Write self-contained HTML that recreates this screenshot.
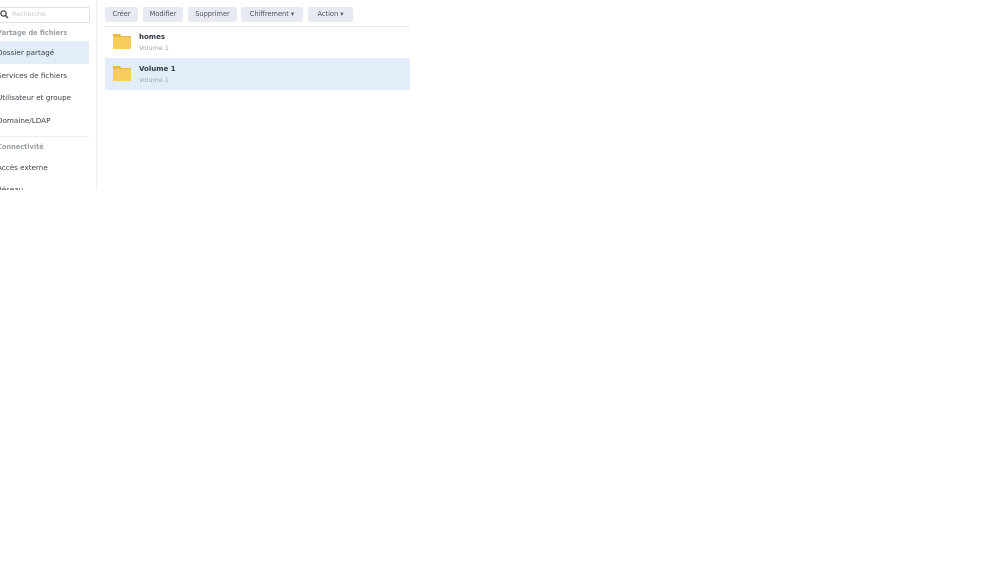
<!DOCTYPE html>
<html><head><meta charset="utf-8"><style>
body{margin:0;width:1000px;height:575px;background:#fff;font-family:"DejaVu Sans","Liberation Sans",sans-serif;position:relative;overflow:hidden;color:#333}
.a{position:absolute;white-space:nowrap}
.side{position:absolute;left:0;top:0;width:96px;height:190px;border-right:1px solid #eceef1;overflow:hidden}
.it{position:absolute;left:-3px;font-size:7.2px;color:#3a3f48}
.hd{position:absolute;left:-3px;font-size:6.6px;color:#9aa0a8;font-weight:bold}
.btn{position:absolute;top:7px;height:15px;background:#e7ebf1;border-radius:2px;font-size:6.6px;color:#4a5260;text-align:center;line-height:15px}
.fold{position:absolute;width:18px;height:15px}
.nm{font-size:7px;font-weight:bold;color:#333a45}
.vl{font-size:6.4px;color:#a0a6ae}
</style></head><body>
<div class="side">
<div class="a" style="left:-2px;top:7px;width:90px;height:14px;border:1px solid #dde1e6;border-radius:2px"></div>
<svg class="a" style="left:0;top:10px" width="9" height="9" viewBox="0 0 9 9"><circle cx="3.5" cy="3.5" r="2.6" fill="none" stroke="#444" stroke-width="1.3"/><path d="M5.5 5.5L8 8" stroke="#444" stroke-width="1.4"/></svg>
<div class="a" style="left:12px;top:10px;font-size:6.4px;color:#c5c9ce">Recherche</div>
<div class="hd" style="top:29px">Partage de fichiers</div>
<div class="a" style="left:0;top:41px;width:89px;height:23px;background:#e3edf9;border-radius:2px"></div>
<div class="it" style="top:48px">Dossier partagé</div>
<div class="it" style="top:71px">Services de fichiers</div>
<div class="it" style="top:93px">Utilisateur et groupe</div>
<div class="it" style="top:116px">Domaine/LDAP</div>
<div class="a" style="left:0;top:136px;width:89px;height:1px;background:#eceef1"></div>
<div class="hd" style="top:143px">Connectivité</div>
<div class="it" style="top:163px">Accès externe</div>
<div class="it" style="top:185px">Réseau</div>
</div>
<div class="btn" style="left:105px;width:33px">Créer</div>
<div class="btn" style="left:143px;width:40px">Modifier</div>
<div class="btn" style="left:188px;width:49px">Supprimer</div>
<div class="btn" style="left:241px;width:62px">Chiffrement ▾</div>
<div class="btn" style="left:308px;width:45px">Action ▾</div>
<div class="a" style="left:105px;top:26px;width:305px;height:1px;background:#e6e8eb"></div>
<div class="a" style="left:105px;top:58px;width:305px;height:32px;background:#e3edf9"></div>
<svg class="fold" style="left:113px;top:34px" viewBox="0 0 18 15"><path d="M0 0h7l1.5 2H18v13H0z" fill="#e9b94a"/><rect y="3" width="18" height="12" fill="#f6cd5a"/></svg>
<svg class="fold" style="left:113px;top:66px" viewBox="0 0 18 15"><path d="M0 0h7l1.5 2H18v13H0z" fill="#e9b94a"/><rect y="3" width="18" height="12" fill="#f6cd5a"/></svg>
<div class="a nm" style="left:139px;top:33px">homes</div>
<div class="a vl" style="left:139px;top:44px">Volume 1</div>
<div class="a nm" style="left:139px;top:65px">Volume 1</div>
<div class="a vl" style="left:139px;top:76px">Volume 1</div>
</body></html>
